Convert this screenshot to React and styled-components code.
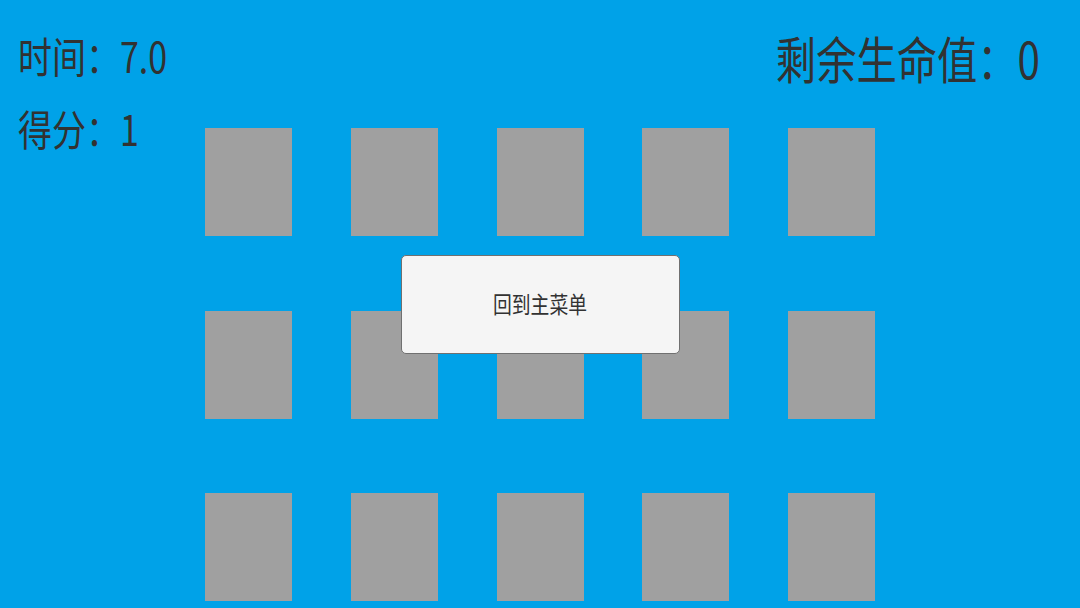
import React from "react";
import styled, { createGlobalStyle } from "styled-components";

const GlobalStyle = createGlobalStyle`
    html, body {
        margin: 0;
        padding: 0;
        background: #00a2e8;
    }
    * {
        box-sizing: border-box;
    }
`;

const Screen = styled.div`
    position: relative;
    width: 1080px;
    height: 608px;
    overflow: hidden;
    background: #00a2e8;
    font-family: "Noto Sans CJK SC", "Noto Sans", sans-serif;
    color: #323232;
`;

const Board = styled.div`
    display: grid;
    grid-template-columns: repeat(5, 87px);
    grid-auto-rows: 108px;
    column-gap: 58.75px;
    row-gap: 74.5px;
    justify-content: center;
    padding-top: 128px;
`;

const Card = styled.div`
    background: #a0a0a0;
`;

const Hud = styled.div`
    position: absolute;
    inset: 0;
    display: flex;
    justify-content: space-between;
    align-items: flex-start;
    padding: 0 40px 0 18px;
    pointer-events: none;
`;

const StatList = styled.div`
    display: flex;
    flex-direction: column;
    gap: 32.6px;
    padding-top: 36px;
`;

// the game's text is drawn taller than the font's natural proportions
const Stat = styled.div`
    height: ${({ h }) => h || 40}px;
    line-height: ${({ h }) => h || 40}px;
    font-size: ${({ size }) => size || 34}px;
    white-space: nowrap;
    transform: scaleY(1.24);
`;

const Lives = styled(Stat)`
    margin-top: 32.7px;
`;

const Overlay = styled.div`
    position: absolute;
    inset: 0;
    display: flex;
    align-items: center;
    justify-content: center;
`;

const MenuButton = styled.button`
    width: 279px;
    height: 99px;
    padding: 0 0 2px;
    background: #f5f5f5;
    border: 1px solid #707070;
    border-radius: 5px;
    font-family: "Noto Sans CJK SC", "Noto Sans", sans-serif;
    color: #323232;
    cursor: pointer;
`;

const ButtonLabel = styled.span`
    display: inline-block;
    font-size: 18.8px;
    line-height: 24px;
    transform: scaleY(1.2);
`;

export default function App() {
    const cards = Array.from({ length: 15 }, (_, i) => i);
    return (
        <>
            <GlobalStyle />
            <Screen>
                <Board>
                    {cards.map((i) => (
                        <Card key={i} />
                    ))}
                </Board>
                <Hud>
                    <StatList>
                        <Stat>时间：7.0</Stat>
                        <Stat>得分：1</Stat>
                    </StatList>
                    <Lives size={40.3} h={50}>
                        剩余生命值：0
                    </Lives>
                </Hud>
                <Overlay>
                    <MenuButton>
                        <ButtonLabel>回到主菜单</ButtonLabel>
                    </MenuButton>
                </Overlay>
            </Screen>
        </>
    );
}
